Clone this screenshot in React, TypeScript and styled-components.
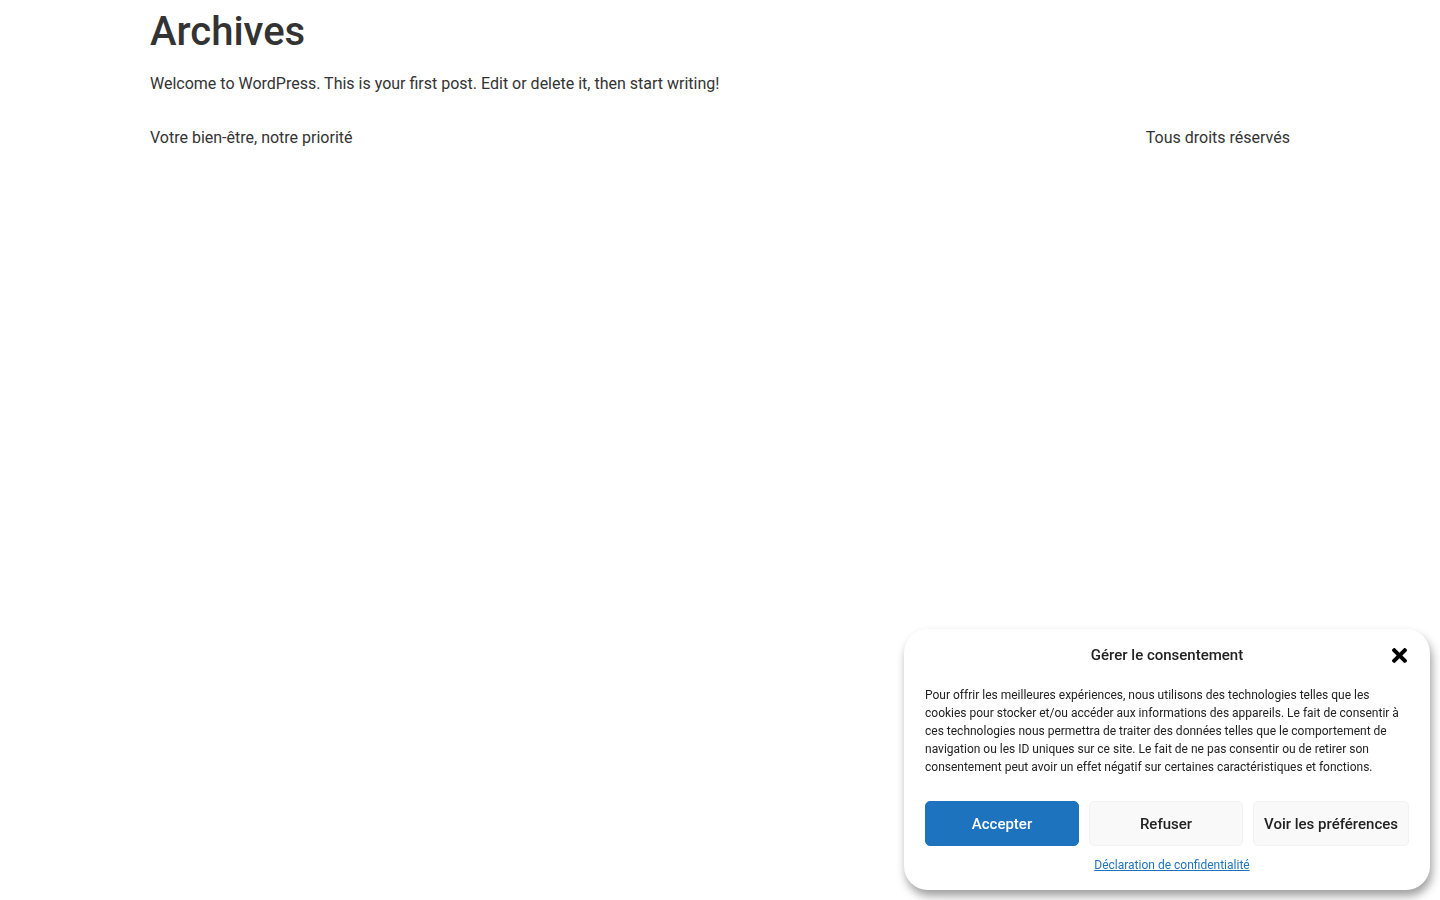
import React from "react";
import styled, { createGlobalStyle } from "styled-components";

const Global = createGlobalStyle`
  html, body { margin: 0; padding: 0; background: #fff; }
  body {
    font-family: Roboto, "Liberation Sans", sans-serif;
    font-size: 16px;
    line-height: 1.5;
    color: #333;
    -webkit-font-smoothing: antialiased;
  }
  * { box-sizing: border-box; }
`;

const Main = styled.main`
  max-width: 1140px;
  margin: 0 auto;
`;

const PageTitle = styled.h1`
  font-size: 40px;
  line-height: 48px;
  font-weight: 500;
  margin: 8px 0 16px;
  color: #333;
`;

const Excerpt = styled.p`
  margin: 0;
  font-size: 16px;
  line-height: 24px;
`;

const Footer = styled.footer`
  max-width: 1140px;
  margin: 30px auto 0;
  display: flex;
  justify-content: space-between;
  font-size: 16px;
  line-height: 24px;
`;

const Banner = styled.div`
  position: fixed;
  right: 10px;
  bottom: 10px;
  width: 526px;
  background: #fff;
  border-radius: 24px;
  box-shadow: 2px 6px 10px rgba(0, 0, 0, 0.38);
  padding: 16px 21px 16px 21px;
  display: flex;
  flex-direction: column;
  color: #222;
`;

const Header = styled.div`
  position: relative;
  height: 20px;
  display: flex;
  align-items: center;
  justify-content: center;
`;

const Title = styled.div`
  font-size: 15px;
  font-weight: 500;
  line-height: 20px;
  color: #222;
`;

const Close = styled.button`
  position: absolute;
  right: 2px;
  top: 3px;
  width: 15px;
  height: 15px;
  padding: 0;
  border: 0;
  background: none;
  display: flex;
  cursor: pointer;
`;

const Message = styled.div`
  margin-top: 21px;
  font-size: 12px;
  line-height: 18px;
  color: #222;
`;

const Buttons = styled.div`
  margin-top: 25px;
  display: grid;
  grid-template-columns: 154px 154px 156px;
  gap: 10px;
`;

const Btn = styled.button<{ $primary?: boolean }>`
  height: 45px;
  border-radius: 5px;
  font-family: Roboto, "Liberation Sans", sans-serif;
  font-size: 15px;
  font-weight: 500;
  cursor: pointer;
  background: ${(p) => (p.$primary ? "#1E73BE" : "#f9f9f9")};
  color: ${(p) => (p.$primary ? "#fff" : "#222")};
  border: 1px solid ${(p) => (p.$primary ? "#1E73BE" : "#f2f2f2")};
  padding: 0;
`;

const Docs = styled.div`
  margin-top: 10px;
  text-align: center;
  padding-left: 10px;
  font-size: 12px;
  line-height: 18px;
`;

const DocLink = styled.a`
  color: #1e73be;
  text-decoration: underline;
`;

export default function App() {
  return (
    <>
      <Global />
      <Main>
        <PageTitle>Archives</PageTitle>
        <Excerpt>
          Welcome to WordPress. This is your first post. Edit or delete it, then start writing!
        </Excerpt>
      </Main>
      <Footer>
        <span>Votre bien-être, notre priorité</span>
        <span>Tous droits réservés</span>
      </Footer>
      <Banner>
        <Header>
          <Title>Gérer le consentement</Title>
          <Close aria-label="Fermer">
            <svg width="15" height="15" viewBox="0 80 352 352">
              <path
                fill="#000"
                d="M242.72 256l100.07-100.07c12.28-12.28 12.28-32.19 0-44.48l-22.24-22.24c-12.28-12.28-32.19-12.28-44.48 0L176 189.28 75.930 89.21c-12.28-12.28-32.19-12.28-44.48 0L9.21 111.45c-12.28 12.28-12.28 32.19 0 44.48L109.28 256 9.21 356.07c-12.28 12.28-12.28 32.19 0 44.48l22.24 22.24c12.28 12.28 32.2 12.28 44.48 0L176 322.72l100.07 100.07c12.28 12.28 32.2 12.28 44.48 0l22.24-22.24c12.28-12.28 12.28-32.19 0-44.48L242.72 256z"
              />
            </svg>
          </Close>
        </Header>
        <Message>
          Pour offrir les meilleures expériences, nous utilisons des technologies telles que les
          cookies pour stocker et/ou accéder aux informations des appareils. Le fait de consentir à
          ces technologies nous permettra de traiter des données telles que le comportement de
          navigation ou les ID uniques sur ce site. Le fait de ne pas consentir ou de retirer son
          consentement peut avoir un effet négatif sur certaines caractéristiques et fonctions.
        </Message>
        <Buttons>
          <Btn $primary>Accepter</Btn>
          <Btn>Refuser</Btn>
          <Btn>Voir les préférences</Btn>
        </Buttons>
        <Docs>
          <DocLink href="#">Déclaration de confidentialité</DocLink>
        </Docs>
      </Banner>
    </>
  );
}
